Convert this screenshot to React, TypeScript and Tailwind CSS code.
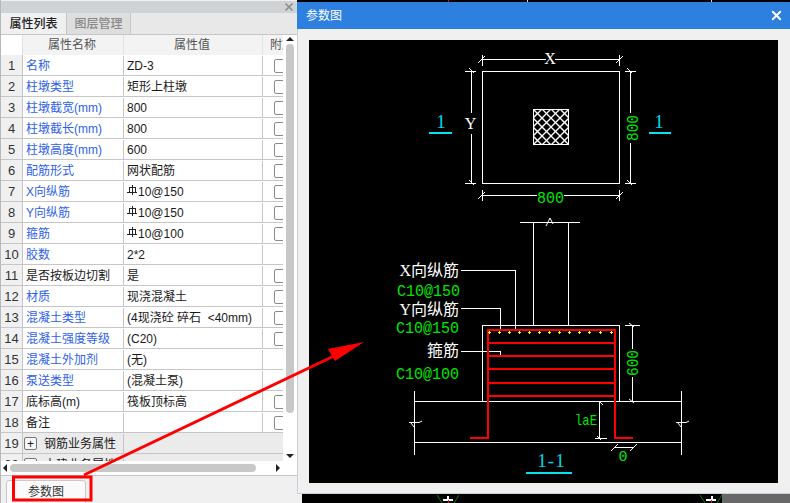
import React from "react";
import { X } from "lucide-react";

const sans = "[font-family:'Liberation_Sans','Noto_Sans_CJK_SC',sans-serif]";

type Row = { name: string; value: string; blue?: boolean; check?: boolean; steel?: boolean };

const rows: Row[] = [
  { name: "名称", value: "ZD-3", blue: true, check: true },
  { name: "柱墩类型", value: "矩形上柱墩", blue: true, check: true },
  { name: "柱墩截宽(mm)", value: "800", blue: true, check: true },
  { name: "柱墩截长(mm)", value: "800", blue: true, check: true },
  { name: "柱墩高度(mm)", value: "600", blue: true, check: true },
  { name: "配筋形式", value: "网状配筋", blue: true, check: true },
  { name: "X向纵筋", value: "10@150", blue: true, check: true, steel: true },
  { name: "Y向纵筋", value: "10@150", blue: true, check: true, steel: true },
  { name: "箍筋", value: "10@100", blue: true, check: true, steel: true },
  { name: "胶数", value: "2*2", blue: true },
  { name: "是否按板边切割", value: "是", check: true },
  { name: "材质", value: "现浇混凝土", blue: true, check: true },
  { name: "混凝土类型", value: "(4现浇砼 碎石  <40mm)", blue: true, check: true },
  { name: "混凝土强度等级", value: "(C20)", blue: true, check: true },
  { name: "混凝土外加剂", value: "(无)", blue: true },
  { name: "泵送类型", value: "(混凝土泵)", blue: true },
  { name: "底标高(m)", value: "筏板顶标高", check: true },
  { name: "备注", value: "", check: true },
];

/* steel grade symbol, drawn small and raised like in the CAD font */
const SteelMark = () => (
  <svg width="10" height="10" viewBox="0 0 10 10" className="mr-px mb-[4px] shrink-0" shapeRendering="crispEdges">
    <path d="M0 7.5H10M5.5 0V10M2.5 2.5H8.5V7.5H2.5Z" fill="none" stroke="#222" strokeWidth="1" />
  </svg>
);

const PropertyRow = ({ no, row }: { no: number; row: Row }) => (
  <div className="flex h-[21px] shrink-0 border-b border-[#c6c6c8] pt-px">
    <div className="-mt-px flex w-[22px] shrink-0 items-center justify-center border-r border-[#c6c6c8] bg-[#f0f0f0] pt-px text-[13px] text-[#333]">{no}</div>
    <div className={`flex w-[101px] shrink-0 items-center border-r border-[#c6c6c8] pl-[3px] whitespace-nowrap ${row.blue ? "text-[#2f5fe8]" : "text-[#1a1a1a]"}`}>
      {row.name}
    </div>
    <div className="flex w-[139px] shrink-0 items-center border-r border-[#c6c6c8] pl-[3px] whitespace-pre text-[#1a1a1a]">
      {row.steel && <SteelMark />}
      {row.value}
    </div>
    <div className="flex flex-1 items-center pl-[11px]">
      {row.check && <span className="h-[14px] w-[14px] shrink-0 rounded-[2px] border border-[#8a8a8a] bg-white" />}
    </div>
  </div>
);

const GroupRow = ({ no, label }: { no: number; label: string }) => (
  <div className="flex h-[21px] shrink-0 border-b border-[#c6c6c8] bg-[#ebebeb] pt-px">
    <div className="-mt-px flex w-[22px] shrink-0 items-center justify-center border-r border-[#c6c6c8] bg-[#f0f0f0] pt-px text-[13px] text-[#333]">{no}</div>
    <div className="flex w-[101px] shrink-0 items-center gap-[7px] border-r border-[#c6c6c8] pl-px whitespace-nowrap text-[#1a1a1a]">
      <span className="flex h-[13px] w-[13px] shrink-0 items-center justify-center rounded-[2px] border border-[#777] bg-[#f6f6f6] text-[12px] leading-none">+</span>
      {label}
    </div>
  </div>
);

const PropertyPanel = () => (
  <div className={`flex h-[503px] w-[297px] shrink-0 flex-col border-l border-[#b5b8bc] bg-[#f0f0f0] text-[12px] ${sans}`}>
    <div className="mt-px flex h-[12px] shrink-0 items-center justify-end bg-[#d0d3d6] pr-[2px]">
      <X size={12} strokeWidth={3.5} className="text-[#8d8d8d]" />
    </div>
    <div className="flex h-[22px] shrink-0 border-b border-[#c6c6c8] bg-[#e8e8e8] text-[12px]">
      <div className="flex w-[65px] items-center justify-center bg-[#f0f0f0] font-medium text-[#222]">属性列表</div>
      <div className="flex w-[65px] items-center justify-center border-x border-[#c6c6c8] bg-[#dedede] font-medium text-[#8a8a8a]">图层管理</div>
    </div>
    <div className="flex h-[426px] shrink-0 bg-white">
      <div className="flex w-[282px] shrink-0 flex-col overflow-hidden">
        <div className="flex h-[20px] shrink-0 text-[#555]">
          <div className="w-[21px] shrink-0 bg-white" />
          <div className="flex w-[102px] shrink-0 items-center justify-center border-x border-[#e2e2e2] bg-[#f3f3f3] pr-[2px]">属性名称</div>
          <div className="flex w-[139px] shrink-0 items-center justify-center border-r border-[#e2e2e2] bg-[#f3f3f3] pr-[2px]">属性值</div>
          <div className="flex-1 bg-[#f3f3f3] pl-[7px] leading-[20px] whitespace-nowrap">附加</div>
        </div>
        {rows.map((r, i) => (
          <PropertyRow key={r.name} no={i + 1} row={r} />
        ))}
        <GroupRow no={19} label="钢筋业务属性" />
        <GroupRow no={20} label="土建业务属性" />
      </div>
      <div className="flex w-[14px] shrink-0 flex-col items-center pt-[2px]">
        <span className="h-0 w-0 border-x-[4px] border-b-[4px] border-x-transparent border-b-[#222]" />
        <span className="mt-[3px] h-[369px] w-[8px] shrink-0 rounded-[4px] bg-[#c8c8c8]" />
        <span className="mt-[41px] h-0 w-0 border-x-[4px] border-t-[4px] border-x-transparent border-t-[#222]" />
      </div>
    </div>
    <div className="flex h-[14px] shrink-0 items-center bg-white pl-[2px]">
      <span className="h-0 w-0 border-y-[4px] border-r-[4px] border-y-transparent border-r-[#222]" />
      <span className="ml-[3px] h-[8px] w-[246px] rounded-[4px] bg-[#c8c8c8]" />
      <span className="ml-[20px] h-0 w-0 border-y-[4px] border-l-[4px] border-y-transparent border-l-[#222]" />
    </div>
    <div className="flex flex-1 items-start overflow-hidden border-t border-[#c6c6c8] pt-[4px] pl-[5px]">
      <button className="flex h-[26px] w-[80px] shrink-0 items-center justify-center rounded-[3px] border border-[#c9c9c9] bg-[#fafafa] pb-[2px] text-[12px] text-[#333]">参数图</button>
    </div>
  </div>
);

const cadText = "'Liberation Mono','Noto Sans CJK SC',monospace";
const cadLabel = "'Liberation Serif','Noto Sans CJK SC',serif";

const Rebar = () => {
  const xs = [489, 499, 509, 519, 529, 539, 549, 559, 569, 579, 589, 600, 611];
  const ys = [343, 356, 369, 383, 396];
  return (
    <g shapeRendering="crispEdges">
      <path d="M470 438H488V330H615V438H633" fill="none" stroke="#ff0000" strokeWidth="2" />
      {ys.map((y) => (
        <line key={y} x1="488" x2="615" y1={y} y2={y} stroke="#ff0000" strokeWidth="2" />
      ))}
      {xs.map((x) => (
        <path key={x} d={`M${x - 1} 332.5H${x + 2}M${x + 0.5} 331V334`} stroke="#ffff00" strokeWidth="1" />
      ))}
    </g>
  );
};

const Tick = ({ x, y }: { x: number; y: number }) => (
  <path d={`M${x - 4} ${y + 4}L${x + 3} ${y - 3}`} stroke="#fff" strokeWidth="1" />
);

const Hatch = () => {
  const lines = [];
  for (let i = -36; i <= 36; i += 9) {
    lines.push(<line key={`a${i}`} x1={533 + i} y1="109" x2={569 + i} y2="145" stroke="#fff" strokeWidth="1.3" />);
    lines.push(<line key={`b${i}`} x1={569 - i} y1="109" x2={533 - i} y2="145" stroke="#fff" strokeWidth="1.3" />);
  }
  return (
    <g>
      <clipPath id="hatch">
        <rect x="533" y="109" width="36" height="36" />
      </clipPath>
      <g clipPath="url(#hatch)">{lines}</g>
      <rect x="533.5" y="109.5" width="35" height="35" fill="none" stroke="#fff" strokeWidth="1" />
    </g>
  );
};

const Drawing = () => (
  <svg width="469" height="443" viewBox="309 40 469 443" className="block bg-black">
    {/* plan view */}
    <g fill="none" stroke="#fff" strokeWidth="1" shapeRendering="crispEdges">
      <rect x="482.5" y="71.5" width="137" height="112" />
      <path d="M482.5 59.5H546M555 59.5H620" />
      <path d="M482.5 55V66M619.5 55V66" />
      <path d="M471.5 71V113M471.5 134V183" />
      <path d="M465 71.5H476M465 183.5H476" />
      <path d="M630.5 71V113M630.5 143V183" />
      <path d="M625 71.5H636M625 183.5H636" />
      <path d="M482.5 195.5H537M564 195.5H620" />
      <path d="M482.5 190V201M619.5 190V201" />
    </g>
    <Tick x={482} y={59} />
    <Tick x={620} y={59} />
    <Tick x={482} y={195} />
    <Tick x={620} y={195} />
    <path d="M469 68l5 5M469 180l5 5M627 68l5 5M627 180l5 5" stroke="#fff" />
    <Hatch />

    <g fontFamily={cadLabel} fontSize="16" fill="#fff">
      <text x="550" y="64" textAnchor="middle">X</text>
      <text x="470.5" y="129" textAnchor="middle">Y</text>
    </g>
    <g fontFamily={cadText} fontSize="16" fill="#00e800">
      <text x="537" y="203" fontSize="17" textLength="27" lengthAdjust="spacingAndGlyphs">800</text>
      <text x="-13" y="0" fontSize="17" textLength="26" lengthAdjust="spacingAndGlyphs" transform="translate(638 128) rotate(-90)">800</text>
      <text x="-13" y="0" fontSize="17" textLength="26" lengthAdjust="spacingAndGlyphs" transform="translate(638 363) rotate(-90)">600</text>
      <text x="575" y="425" fontSize="15" textLength="22" lengthAdjust="spacingAndGlyphs">laE</text>
      <text x="623" y="461" textAnchor="middle" fontSize="15">0</text>
    </g>
    <g fontFamily="'Liberation Serif',serif" fill="#00d8e8">
      <text x="441" y="128" textAnchor="middle" fontSize="19">1</text>
      <text x="659" y="128" textAnchor="middle" fontSize="19">1</text>
      <text x="551.5" y="467" textAnchor="middle" fontSize="19" letterSpacing="1">1-1</text>
    </g>
    <g fill="#00e5f0" shapeRendering="crispEdges">
      <rect x="429" y="132" width="23" height="2" />
      <rect x="649" y="132" width="22" height="2" />
      <rect x="526" y="472" width="46" height="2" />
    </g>

    {/* section view */}
    <g fill="none" stroke="#fff" strokeWidth="1" shapeRendering="crispEdges">
      <path d="M520 222.5H580M533.5 222V325M568.5 222V325" />
      <path d="M482.5 401V325.5H619.5V401" />
      <path d="M414 401.5H681.5M414 442.5H681.5" />
      <path d="M414.5 391V455M681.5 391V455" />
      <path d="M461 270.5H515.5V331M461 308.5H500.5V331M461 351.5H500.5V356" />
      <path d="M632.5 325V349M632.5 377V401M625 325.5H640" />
      <path d="M599.5 401V438M595 438.5H607" />
      <path d="M615 447.5H634" />
    </g>
    <path d="M546 226L550 218L553 224" fill="none" stroke="#fff" />
    <Tick x={615} y={447} />
    <Tick x={634} y={447} />
    <path d="M409 422.5H419L422 421M411 423l3 4M676 422.5H686L689 421M678 423l3 4M599 401l4 4M629 323l5 4M629 399l5 4M597 436l4 4" fill="none" stroke="#fff" />
    <Rebar />

    <g fontFamily={cadLabel} fill="#fff" fontSize="16">
      <text x="459" y="276" textAnchor="end">X向纵筋</text>
      <text x="459" y="315" textAnchor="end">Y向纵筋</text>
      <text x="459" y="356" textAnchor="end">箍筋</text>
    </g>
    <g fontFamily={cadText} fill="#00e800" fontSize="17">
      <text x="397" y="296" textLength="63" lengthAdjust="spacingAndGlyphs">C10@150</text>
      <text x="396" y="333" textLength="63" lengthAdjust="spacingAndGlyphs">C10@150</text>
      <text x="396" y="379" textLength="63" lengthAdjust="spacingAndGlyphs">C10@100</text>
    </g>
  </svg>
);

const ParamDialog = () => (
  <div className="flex min-h-0 flex-1 flex-col bg-[#f0f0f0]">
    <div className={`flex h-[27px] shrink-0 items-center justify-between bg-[#2d7fe0] pr-[6px] pl-[9px] text-[12px] text-white ${sans}`}>
      <span>参数图</span>
      <X size={15} strokeWidth={3} />
    </div>
    <div className="flex flex-1 items-start border-b border-l border-[#c9d0dc] pt-[11px] pl-[11px]">
      <Drawing />
    </div>
  </div>
);

/* what shows of the window behind the dialog */
const TopStrip = () => (
  <svg width="493" height="2" viewBox="297 0 493 2" className="block shrink-0">
    <path d="M448.5 0V2" stroke="#e01010" />
    <path d="M527.5 0V2M711.5 0V2" stroke="#d8d8d8" />
  </svg>
);

const BackStrip = () => (
  <div className="flex h-[9px] shrink-0 bg-black">
    <div className="w-[5px] shrink-0 bg-[#f0f0f0]" />
    <svg width="420" height="9" viewBox="302 494 420 9" className="shrink-0">
      <path d="M437 495L442 503M459 495L454 503M700 495L705 503M722 495L717 503" stroke="#0a7a0a" fill="none" />
      <path d="M443 500H453M448 496V500M706 500H716M712 496V500" stroke="#fff" strokeWidth="2" />
      <path d="M448.5 500V503M711.5 500V503" stroke="#e01010" />
    </svg>
    <div className="flex-1 bg-[#686868]" />
  </div>
);

const Overlay = () => (
  <svg width="790" height="503" viewBox="0 0 790 503" className="pointer-events-none absolute top-0 left-0">
    <rect x="13.5" y="477" width="77.5" height="23" fill="none" stroke="#ff0000" strokeWidth="3" />
    <line x1="84" y1="475" x2="334" y2="356" stroke="#ff0000" strokeWidth="3" />
    <polygon points="364,342 328,349 335,361" fill="#ff0000" />
  </svg>
);

export default function App() {
  return (
    <div className="relative flex h-[503px] w-[790px] overflow-hidden bg-black">
      <PropertyPanel />
      <div className="flex w-[493px] shrink-0 flex-col">
        <TopStrip />
        <ParamDialog />
        <BackStrip />
      </div>
      <Overlay />
    </div>
  );
}
